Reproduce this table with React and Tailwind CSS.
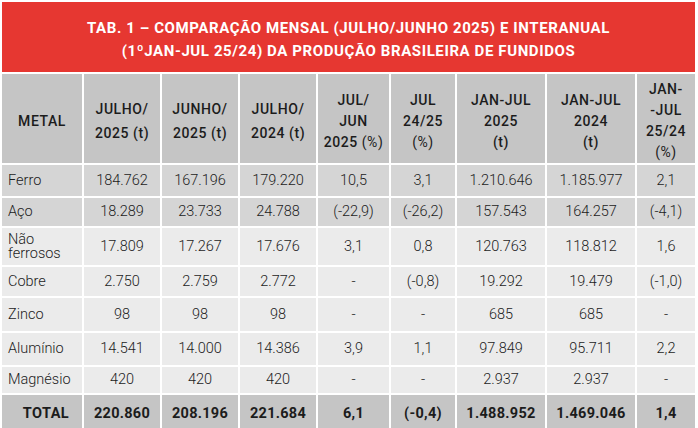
import React from "react";

const head = [
  { lines: ["METAL"] },
  { lines: ["JULHO/", "2025 (t)"], lh: "leading-[24px]" },
  { lines: ["JUNHO/", "2025 (t)"], lh: "leading-[24px]" },
  { lines: ["JULHO/", "2024 (t)"], lh: "leading-[24px]" },
  { lines: ["JUL/", "JUN", <>2025 <span className="font-normal">(%)</span></>] },
  { lines: ["JUL", "24/25", <span className="font-normal">(%)</span>] },
  { lines: ["JAN-JUL", "2025", "(t)"] },
  { lines: ["JAN-JUL", "2024", "(t)"] },
  { lines: ["JAN-", "-JUL", "25/24", <span className="font-normal">(%)</span>] },
];

const rows = [
  { metal: "Ferro", vals: ["184.762", "167.196", "179.220", "10,5", "3,1", "1.210.646", "1.185.977", "2,1"], dark: true },
  { metal: "Aço", vals: ["18.289", "23.733", "24.788", "(-22,9)", "(-26,2)", "157.543", "164.257", "(-4,1)"], dark: true },
  { metal: "Não ferrosos", vals: ["17.809", "17.267", "17.676", "3,1", "0,8", "120.763", "118.812", "1,6"] },
  { metal: "Cobre", vals: ["2.750", "2.759", "2.772", "-", "(-0,8)", "19.292", "19.479", "(-1,0)"] },
  { metal: "Zinco", vals: ["98", "98", "98", "-", "-", "685", "685", "-"] },
  { metal: "Alumínio", vals: ["14.541", "14.000", "14.386", "3,9", "1,1", "97.849", "95.711", "2,2"] },
  { metal: "Magnésio", vals: ["420", "420", "420", "-", "-", "2.937", "2.937", "-"] },
];

const total = ["220.860", "208.196", "221.684", "6,1", "(-0,4)", "1.488.952", "1.469.046", "1,4"];

export default function App() {
  return (
    <div className="w-[698px] h-[428px] overflow-hidden bg-white pl-[2px] pt-[2px] font-['Roboto',sans-serif]">
      {/* Título */}
      <div className="w-[693px] h-[70px] bg-[#e63731] flex items-center justify-center pt-[6px] text-center text-white font-bold text-[15px] leading-[23px] tracking-[0.04em]">
        <p>
          TAB. 1 – COMPARAÇÃO MENSAL (JULHO/JUNHO 2025) E INTERANUAL
          <br />
          (1ºJAN-JUL 25/24) DA PRODUÇÃO BRASILEIRA DE FUNDIDOS
        </p>
      </div>

      {/* Tabela */}
      <div className="mt-[2px] w-[693px] grid grid-cols-[80px_76px_76px_76px_71px_64px_88px_88px_58px] grid-rows-[89px_31px_28px_37px_29px_33px_32px_26px_40px] gap-[2px] text-[#1c1c1c]">
        {head.map((h, i) => (
          <div
            key={i}
            className={`bg-[#c5c5c5] flex flex-col items-center justify-center pt-[5px] text-center font-medium text-[14px] tracking-[0.04em] ${h.lh || "leading-[21px]"}`}
          >
            {h.lines.map((l, j) => (
              <span key={j}>{l}</span>
            ))}
          </div>
        ))}

        {rows.map((r) => (
          <React.Fragment key={r.metal}>
            <div
              className={`${r.dark ? "bg-[#d5d5d5]" : "bg-[#ebebeb]"} flex items-center pl-[6px] font-light text-[14.5px]`}
            >
              {r.metal === "Não ferrosos" ? (
                <span className="leading-[14px]">
                  Não
                  <br />
                  ferrosos
                </span>
              ) : (
                r.metal
              )}
            </div>
            {r.vals.map((v, j) => (
              <div
                key={j}
                className={`${r.dark ? "bg-[#d5d5d5]" : "bg-[#ebebeb]"} flex items-center justify-center font-light text-[14.5px]`}
              >
                {v}
              </div>
            ))}
          </React.Fragment>
        ))}

        <div className="bg-[#c5c5c5] flex items-start justify-center pt-[8px] pl-[8px] font-bold text-[14.5px] tracking-[0.03em]">
          TOTAL
        </div>
        {total.map((v, j) => (
          <div key={j} className="bg-[#c5c5c5] flex items-start justify-center pt-[8px] font-bold text-[14.5px] tracking-[0.02em]">
            {v}
          </div>
        ))}
      </div>
    </div>
  );
}
